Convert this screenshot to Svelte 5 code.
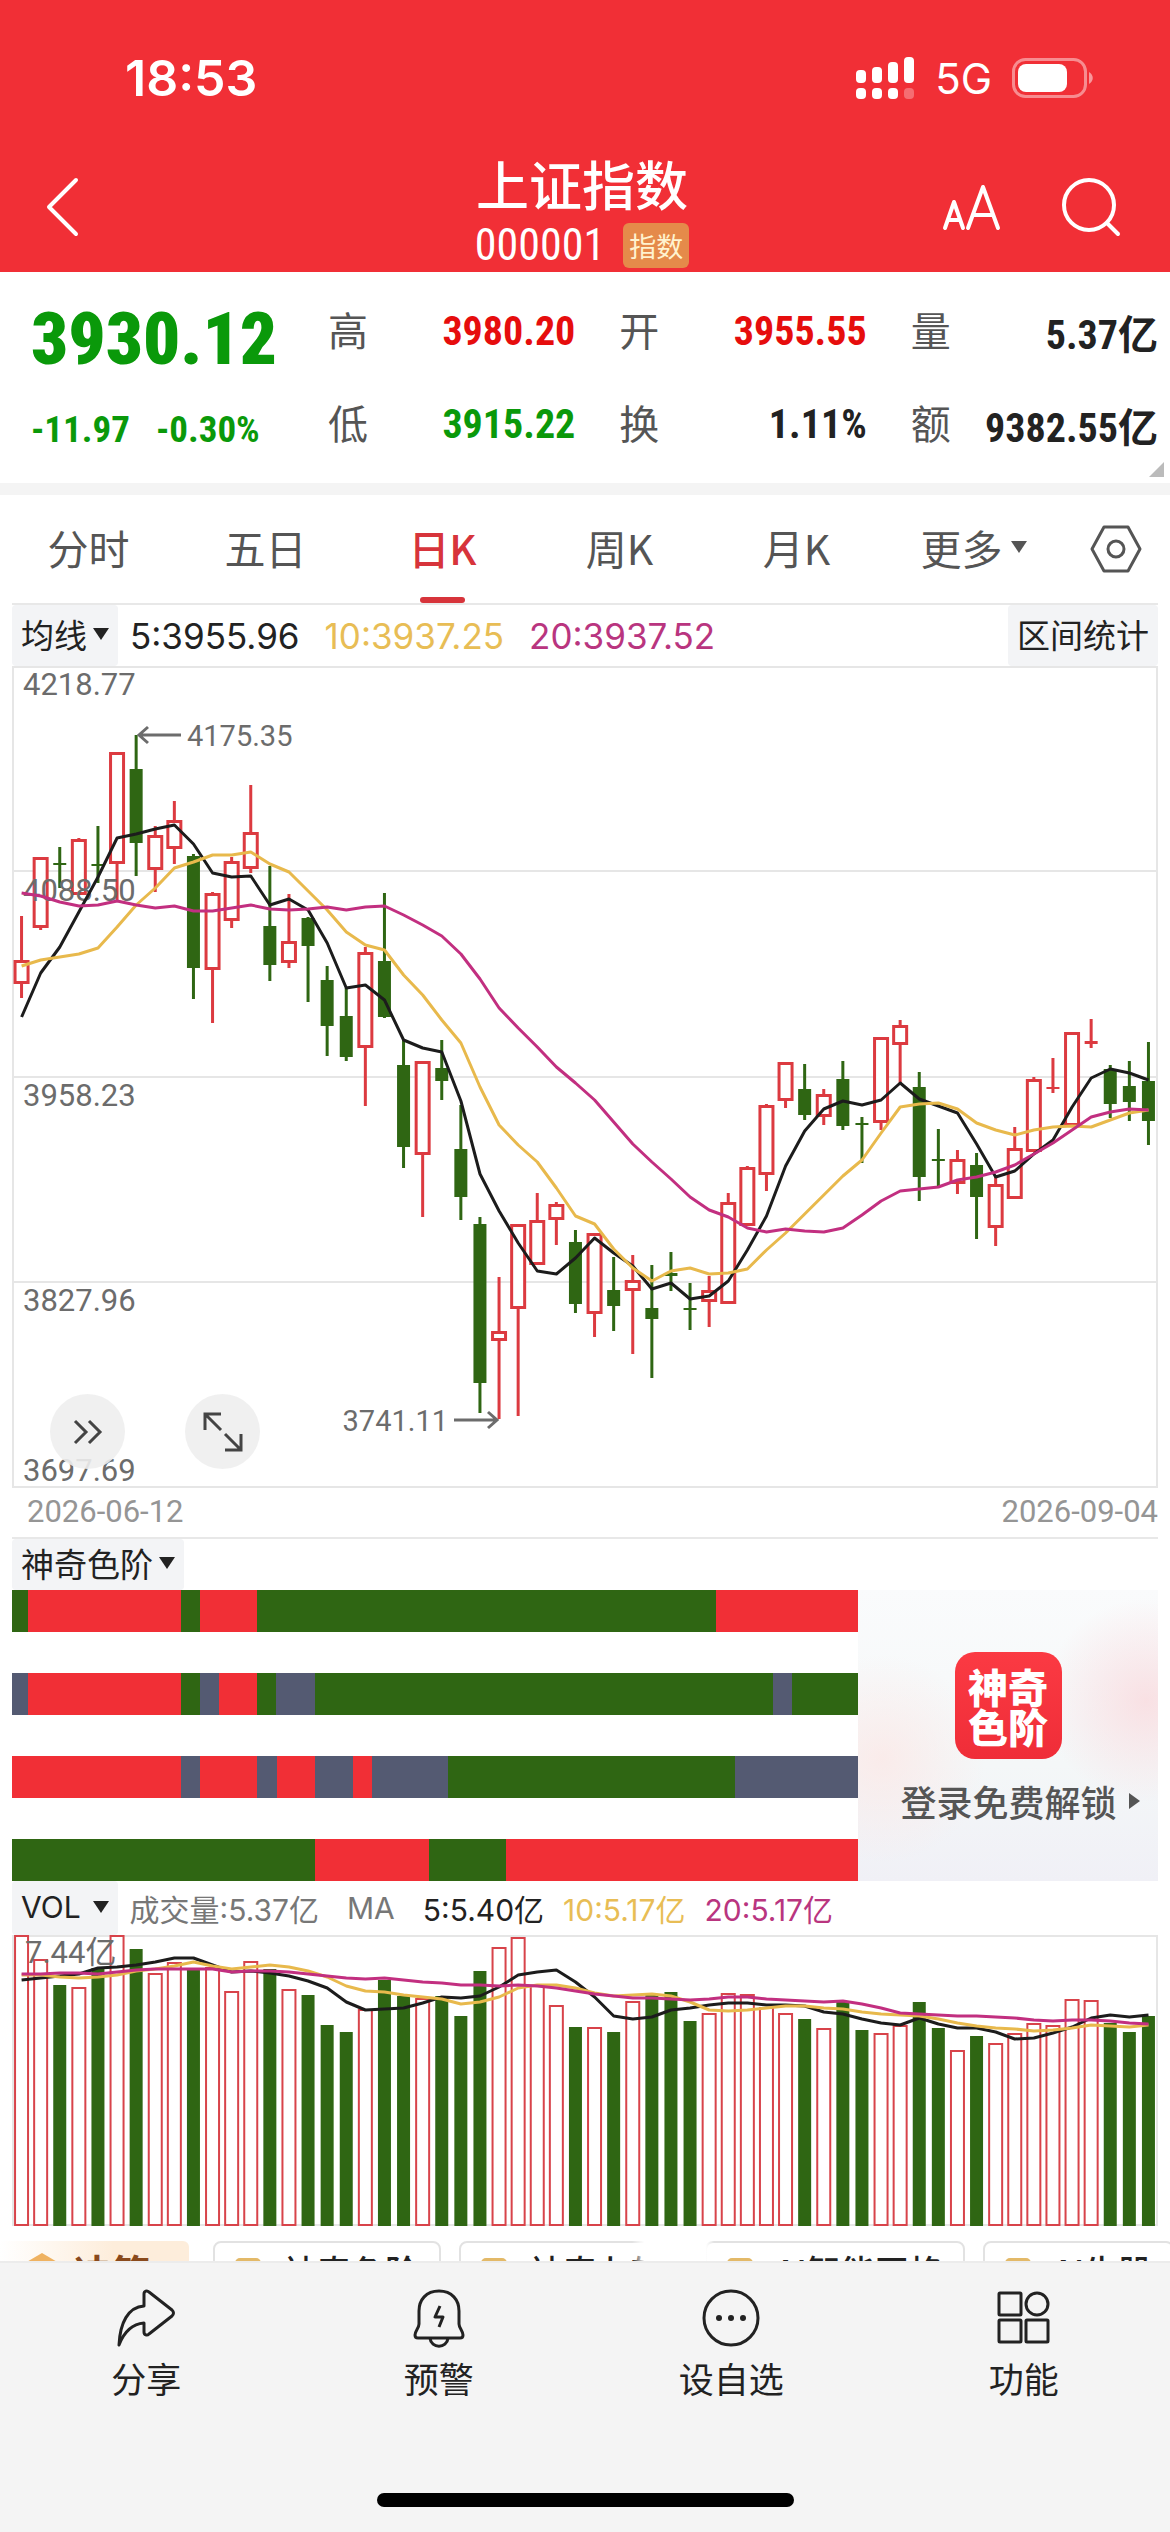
<script lang="ts">
	type Candle = [kind: 'r' | 'g', high: number, top: number, bottom: number, low: number];

	const STEP = 19.1;

	const quotes = [
		{ label: '高', value: '3980.20', tone: 'up' },
		{ label: '开', value: '3955.55', tone: 'up' },
		{ label: '量', value: '5.37亿', tone: '' },
		{ label: '低', value: '3915.22', tone: 'down' },
		{ label: '换', value: '1.11%', tone: '' },
		{ label: '额', value: '9382.55亿', tone: '' }
	];

	const tabs = ['分时', '五日', '日K', '周K', '月K', '更多'];
	let activeTab = $state('日K');

	// y positions inside the 1146 x 822 price chart
	const candles: Candle[] = [
		['r', 250, 294, 318, 332],
		['r', 191, 191, 262, 264],
		['g', 181, 197, 199, 222],
		['r', 172, 173, 229, 229],
		['g', 160, 198, 200, 217],
		['r', 86, 86, 198, 234],
		['g', 69, 103, 177, 210],
		['r', 160, 169, 204, 226],
		['r', 135, 154, 183, 198],
		['g', 188, 190, 302, 333],
		['r', 226, 227, 304, 357],
		['r', 191, 195, 255, 262],
		['r', 119, 166, 203, 207],
		['g', 200, 260, 299, 315],
		['r', 228, 275, 297, 302],
		['g', 251, 252, 280, 336],
		['g', 300, 314, 360, 390],
		['g', 322, 350, 391, 395],
		['r', 281, 286, 382, 440],
		['g', 227, 295, 351, 352],
		['g', 374, 399, 481, 502],
		['r', 395, 395, 489, 551],
		['g', 374, 402, 415, 434],
		['g', 439, 483, 531, 554],
		['g', 551, 558, 717, 747],
		['r', 611, 665, 675, 753],
		['r', 558, 558, 643, 750],
		['r', 527, 554, 599, 599],
		['r', 536, 538, 554, 579],
		['g', 564, 576, 638, 647],
		['r', 567, 567, 648, 671],
		['g', 591, 624, 640, 665],
		['r', 589, 614, 625, 688],
		['g', 599, 642, 653, 712],
		['g', 586, 607, 610, 625],
		['g', 617, 642, 644, 664],
		['r', 610, 624, 636, 661],
		['r', 527, 536, 638, 638],
		['r', 500, 501, 560, 560],
		['r', 438, 439, 509, 525],
		['r', 396, 396, 435, 442],
		['g', 398, 423, 449, 454],
		['r', 423, 428, 451, 459],
		['g', 395, 413, 460, 464],
		['g', 451, 457, 459, 497],
		['r', 371, 371, 457, 464],
		['r', 354, 359, 379, 417],
		['g', 406, 421, 511, 535],
		['g', 463, 493, 495, 520],
		['r', 484, 493, 518, 528],
		['g', 487, 499, 531, 573],
		['r', 511, 518, 562, 580],
		['r', 461, 482, 533, 533],
		['r', 411, 413, 486, 486],
		['r', 392, 421, 423, 427],
		['r', 366, 366, 460, 460],
		['r', 353, 375, 378, 382],
		['g', 399, 403, 438, 452],
		['g', 395, 420, 436, 455],
		['g', 376, 415, 455, 479]
	];

	const priceLines = {
		ma5: [
			351, 307, 281, 246, 211, 172, 168, 163, 159, 178, 207, 211, 210, 239, 233, 244, 277, 322, 319,
			334, 374, 382, 386, 435, 508, 545, 577, 605, 608, 592, 572, 587, 600, 623, 617, 633, 630, 615,
			584, 550, 500, 465, 443, 435, 439, 434, 417, 433, 440, 447, 478, 511, 505, 488, 474, 441, 412,
			403, 407, 414
		],
		ma10: [
			300, 294, 291, 288, 282, 261, 239, 222, 202, 196, 189, 189, 186, 198, 206, 225, 244, 266, 279,
			284, 309, 329, 354, 377, 421, 459, 479, 496, 522, 550, 558, 583, 602, 615, 605, 602, 608, 607,
			603, 584, 567, 548, 529, 510, 494, 467, 441, 438, 437, 443, 457, 464, 469, 464, 461, 460, 461,
			454, 447, 444
		],
		ma20: [
			227, 230, 236, 240, 239, 235, 239, 242, 240, 245, 245, 242, 239, 243, 244, 243, 241, 244, 241,
			240, 249, 259, 270, 288, 313, 342, 362, 381, 401, 417, 434, 456, 478, 496, 513, 531, 544, 551,
			562, 566, 563, 565, 566, 562, 549, 535, 525, 523, 521, 514, 511, 506, 499, 488, 477, 464, 451,
			446, 443, 444
		]
	};

	// tops of the volume bars, chart height is 291
	const volumes = [
		0, 24, 50, 52, 33, 0, 14, 38, 27, 33, 32, 56, 26, 34, 54, 60, 90, 97, 74, 45, 61, 63, 61, 81, 36,
		12, 2, 50, 70, 92, 92, 97, 66, 60, 57, 86, 78, 58, 59, 72, 78, 84, 93, 67, 95, 98, 90, 67, 93,
		115, 101, 108, 98, 88, 90, 64, 65, 88, 97, 81
	];

	const volumeLines = {
		ma5: [
			45, 43, 41, 39, 33, 32, 30, 27, 23, 23, 30, 37, 36, 38, 41, 46, 53, 67, 75, 74, 73, 68, 62, 63,
			61, 52, 40, 37, 35, 47, 62, 81, 84, 82, 75, 73, 70, 68, 68, 70, 70, 71, 77, 79, 84, 88, 90, 83,
			89, 93, 93, 97, 104, 103, 98, 92, 83, 80, 82, 80
		],
		ma10: [
			40, 40, 42, 43, 42, 40, 36, 34, 31, 27, 31, 34, 32, 30, 32, 36, 42, 51, 56, 57, 60, 62, 64, 69,
			67, 62, 53, 50, 50, 53, 58, 61, 60, 59, 61, 67, 75, 76, 75, 73, 71, 71, 73, 74, 77, 79, 80, 81,
			84, 88, 91, 93, 94, 96, 95, 93, 90, 91, 92, 90
		],
		ma20: [
			39, 39, 38, 38, 39, 37, 35, 34, 34, 34, 34, 37, 36, 36, 37, 39, 41, 43, 44, 43, 45, 47, 48, 50,
			50, 51, 50, 51, 53, 56, 59, 61, 63, 63, 64, 65, 64, 62, 62, 64, 65, 66, 67, 66, 69, 73, 78, 79,
			80, 81, 81, 82, 83, 85, 86, 85, 85, 86, 88, 89
		]
	};

	const axis = [
		{ price: '4218.77', y: 29 },
		{ price: '4088.50', y: 235 },
		{ price: '3958.23', y: 440 },
		{ price: '3827.96', y: 645 },
		{ price: '3697.69', y: 815 }
	];

	// colour ladder: [colour, number of days]
	const ladder: [string, number][][] = [
		[['g', 0.85], ['r', 8], ['g', 1], ['r', 3], ['g', 24], ['r', 7.45]],
		[['n', 0.85], ['r', 8], ['g', 1], ['n', 1], ['r', 2], ['g', 1], ['n', 2], ['g', 24], ['n', 1], ['g', 3.45]],
		[['r', 8.85], ['n', 1], ['r', 3], ['n', 1], ['r', 2], ['n', 2], ['r', 1], ['n', 4], ['g', 15], ['n', 6.45]],
		[['g', 15.85], ['r', 6], ['g', 4], ['r', 18.45]]
	];

	const chips = ['神奇色阶', '神奇九转', 'AI智能网格', 'AI牛股'];

	const cx = (i: number) => STEP * (i + 0.5);
	const points = (ys: number[]) => ys.map((y, i) => `${cx(i).toFixed(1)},${y}`).join(' ');
</script>

<div class="page">
	<header>
		<div class="status">
			<span class="time">18:53</span>
			<div class="status-right">
				<svg width="60" height="44" viewBox="0 0 60 44" fill="#fff">
					<rect x="1" y="14" width="10" height="13" rx="4" />
					<rect x="17" y="11" width="10" height="16" rx="4" />
					<rect x="33" y="6" width="10" height="21" rx="4" />
					<rect x="49" y="1" width="10" height="26" rx="4" />
					<rect x="1" y="32" width="10" height="11" rx="4" />
					<rect x="17" y="32" width="10" height="11" rx="4" />
					<rect x="33" y="32" width="10" height="11" rx="4" />
					<rect x="49" y="32" width="10" height="11" rx="4" opacity="0.3" />
				</svg>
				<span class="network">5G</span>
				<svg width="82" height="40" viewBox="0 0 82 40">
					<rect x="1.5" y="1.5" width="72" height="37" rx="12" fill="none" stroke="#fff" stroke-width="3" opacity="0.45" />
					<rect x="6" y="6" width="49" height="28" rx="8" fill="#fff" />
					<path d="M77 14c5 3 5 9 0 12z" fill="#fff" opacity="0.5" />
				</svg>
			</div>
		</div>
		<div class="titlebar">
			<button class="back" aria-label="返回">
				<svg width="40" height="62" viewBox="0 0 40 62" fill="none" stroke="#fff" stroke-width="4" stroke-linecap="round" stroke-linejoin="round">
					<path d="M34 4L7 31l27 27" />
				</svg>
			</button>
			<div class="title">
				<h1>上证指数</h1>
				<div class="code"><span>000001</span><span class="badge">指数</span></div>
			</div>
			<div class="actions">
				<button aria-label="字体大小">
					<svg width="60" height="48" viewBox="0 0 60 48" fill="none" stroke="#fff" stroke-width="4" stroke-linecap="round" stroke-linejoin="round">
						<path d="M3 45L12 19l9 26M6 37h12M26 45L41 4l15 41M31 32h20" />
					</svg>
				</button>
				<button aria-label="搜索">
					<svg width="62" height="62" viewBox="0 0 62 62" fill="none" stroke="#fff" stroke-width="4" stroke-linecap="round">
						<circle cx="29" cy="29" r="25" />
						<path d="M47 47l11 11" />
					</svg>
				</button>
			</div>
		</div>
	</header>

	<section class="quote">
		<div class="last">
			<strong>3930.12</strong>
			<div class="change"><span>-11.97</span><span>-0.30%</span></div>
		</div>
		<dl>
			{#each quotes as quote (quote.label)}
				<div>
					<dt>{quote.label}</dt>
					<dd class={quote.tone}>{quote.value}</dd>
				</div>
			{/each}
		</dl>
		<i class="corner"></i>
	</section>

	<nav class="tabs">
		{#each tabs as tab (tab)}
			<button class:active={tab === activeTab} onclick={() => (activeTab = tab)}>
				{tab}{#if tab === '更多'}<i class="caret"></i>{/if}
			</button>
		{/each}
		<button class="setting" aria-label="设置">
			<svg width="54" height="50" viewBox="0 0 54 50" fill="none" stroke="#555" stroke-width="3" stroke-linejoin="round">
				<path d="M15 3h24l12 22-12 22H15L3 25z" />
				<circle cx="27" cy="25" r="8" />
			</svg>
		</button>
	</nav>

	<main>
		<div class="toolbar">
			<button class="picker">均线<i class="caret"></i></button>
			<span class="c5">5:3955.96</span>
			<span class="c10">10:3937.25</span>
			<span class="c20">20:3937.52</span>
			<button class="picker range">区间统计</button>
		</div>

		<div class="price">
			<svg viewBox="0 0 1146 822">
				<path class="frame" d="M1 1H1145V821H1z" />
				{#each [205, 411, 616] as y (y)}
					<path class="grid" d="M0 {y}H1146" />
				{/each}
				{#each candles as [kind, high, top, bottom, low], i (i)}
					{#if kind === 'g'}
						<path class="wick-g" d="M{cx(i)} {high}V{low}" />
						<rect class="fill-g" x={cx(i) - 6.5} y={top} width="13" height={bottom - top} />
					{:else}
						<path class="wick-r" d="M{cx(i)} {high}V{top}M{cx(i)} {bottom}V{low}" />
						{#if bottom - top < 5}
							<rect class="fill-r" x={cx(i) - 6.5} y={top} width="13" height={bottom - top} />
							<path class="wick-r" d="M{cx(i)} {top}V{bottom}" />
						{:else}
							<rect class="line-r" x={cx(i) - 6.5} y={top + 1.5} width="13" height={bottom - top - 3} />
						{/if}
					{/if}
				{/each}
				{#each axis as { price, y } (price)}
					<text class="axis" x="11" {y}>{price}</text>
				{/each}
				<polyline class="s5" points={points(priceLines.ma5)} />
				<polyline class="s10" points={points(priceLines.ma10)} />
				<polyline class="s20" points={points(priceLines.ma20)} />
				<path class="arrow" d="M169 69H127M136 61l-9 8 9 8" />
				<text class="mark" x="175" y="80">4175.35</text>
				<path class="arrow" d="M442 754H485M476 746l9 8-9 8" />
				<text class="mark" x="436" y="765" text-anchor="end">3741.11</text>
			</svg>
			<div class="float">
				<button aria-label="展开">
					<svg width="32" height="28" viewBox="0 0 32 28" fill="none" stroke="#444" stroke-width="3">
						<path d="M3 3l11 11L3 25M17 3l11 11-11 11" />
					</svg>
				</button>
				<button aria-label="全屏">
					<svg width="42" height="42" viewBox="0 0 42 42" fill="none" stroke="#444" stroke-width="3">
						<path d="M19 3H3v16M3 3l16 16M23 39h16V23M39 39L23 23" />
					</svg>
				</button>
			</div>
		</div>
		<div class="dates"><span>2026-06-12</span><span>2026-09-04</span></div>

		<div class="ladder-head">
			<button class="picker">神奇色阶<i class="caret"></i></button>
		</div>
		<div class="ladder">
			<div class="strips">
				{#each ladder as strip, i (i)}
					<div class="strip">
						{#each strip as [color, days], j (j)}
							<i class="cell-{color}" style="flex-grow: {days}"></i>
						{/each}
					</div>
				{/each}
			</div>
			<a class="unlock" href="#login">
				<span class="logo">神奇<br />色阶</span>
				<span class="unlock-text">登录免费解锁<i></i></span>
			</a>
		</div>

		<div class="volume-head">
			<button class="picker">VOL<i class="caret"></i></button>
			<span class="total">成交量:5.37亿</span>
			<span class="ma">MA</span>
			<span class="c5">5:5.40亿</span>
			<span class="c10">10:5.17亿</span>
			<span class="c20">20:5.17亿</span>
		</div>
		<svg class="volume" viewBox="0 0 1146 291">
			<path class="frame" d="M1 1H1145V290H1z" />
			{#each volumes as top, i (i)}
				{#if candles[i][0] === 'g'}
					<rect class="fill-g" x={cx(i) - 6.5} y={top} width="13" height={291 - top} />
				{:else}
					<rect class="bar-r" x={cx(i) - 6.5} y={top + 1} width="13" height={289 - top} />
				{/if}
			{/each}
			<text class="axis" x="13" y="28">7.44亿</text>
			<polyline class="s5" points={points(volumeLines.ma5)} />
			<polyline class="s10" points={points(volumeLines.ma10)} />
			<polyline class="s20" points={points(volumeLines.ma20)} />
		</svg>
	</main>

	<div class="chips">
		<button class="decision">
			<svg width="36" height="36" viewBox="0 0 36 36" fill="#efb261"><path d="M18 0l17 10v16L18 36 1 26V10z" /></svg>
			决策
		</button>
		{#each chips as chip (chip)}
			<button class="chip"><i></i>{chip}</button>
		{/each}
	</div>

	<footer>
		<div class="menu">
			<button>
				<svg width="60" height="60" viewBox="0 0 60 60">
					<path d="M3 57C4 35 12 19 28 18V6c0-3 3-4 5-2l23 18q3 3 0 6L33 46c-2 2-5 1-5-2V35C16 36 8 44 3 57z" />
				</svg>
				分享
			</button>
			<button>
				<svg width="60" height="60" viewBox="0 0 60 60">
					<path d="M30 3C17 3 10 12 10 23v13c0 4-4 7-4 11 0 2 1 3 3 3h42c2 0 3-1 3-3 0-4-4-7-4-11V23C50 12 43 3 30 3z" />
					<path d="M21 50c1 11 17 11 18 0" />
					<path d="M31 18l-5 11h8l-4 10" />
				</svg>
				预警
			</button>
			<button>
				<svg width="60" height="60" viewBox="0 0 60 60">
					<circle cx="30" cy="30" r="27" />
					<g class="dots">
						<circle cx="18" cy="30" r="3" />
						<circle cx="30" cy="30" r="3" />
						<circle cx="42" cy="30" r="3" />
					</g>
				</svg>
				设自选
			</button>
			<button>
				<svg width="60" height="60" viewBox="0 0 60 60">
					<rect x="5" y="5" width="22" height="22" rx="1" />
					<circle cx="43" cy="16" r="11" />
					<rect x="5" y="32" width="22" height="22" rx="1" />
					<rect x="32" y="32" width="22" height="22" rx="1" />
				</svg>
				功能
			</button>
		</div>
		<div class="home"></div>
	</footer>
</div>

<style>
	:global(body) {
		margin: 0;
		background: #f4f4f4;
	}

	.page {
		--red: #f12f36;
		--green: #2f6613;
		--sans: Inter, 'Noto Sans CJK SC', sans-serif;
		--din: 'Liberation Sans Narrow', 'Roboto Condensed', 'Noto Sans CJK SC', sans-serif;
		font-family: 'Noto Sans CJK SC', sans-serif;
		background: #fff;
		color: #222;
	}

	button {
		border: 0;
		padding: 0;
		background: none;
		font: inherit;
		color: inherit;
	}

	svg {
		display: block;
	}

	header {
		background: var(--red);
		color: #fff;
		padding-bottom: 4px;
	}

	.status {
		display: flex;
		justify-content: space-between;
		align-items: center;
		height: 156px;
		padding: 0 76px 0 125px;
		font-family: var(--sans);
	}

	.time {
		font-size: 50px;
		font-weight: 600;
	}

	.status-right {
		display: flex;
		align-items: center;
		gap: 20px;
	}

	.network {
		font-size: 42px;
	}

	.titlebar {
		display: grid;
		grid-template-columns: 1fr auto 1fr;
		align-items: center;
		height: 112px;
		padding: 0 48px 0 42px;
	}

	.back {
		justify-self: start;
		padding-bottom: 14px;
	}

	.title {
		display: grid;
		gap: 8px;
		text-align: center;
	}

	h1 {
		margin: 0;
		font-size: 53px;
		line-height: 54px;
		font-weight: 500;
	}

	.code {
		display: flex;
		align-items: center;
		justify-content: center;
		gap: 18px;
		font-family: var(--din);
		font-size: 44px;
		line-height: 54px;
	}

	.badge {
		padding: 0 6px;
		border-radius: 6px;
		background: #e58a4a;
		color: #fff3cf;
		font-family: 'Noto Sans CJK SC', sans-serif;
		font-size: 27px;
		line-height: 45px;
	}

	.actions {
		display: flex;
		align-items: center;
		justify-content: flex-end;
		gap: 58px;
		padding-bottom: 14px;
	}

	.quote {
		position: relative;
		display: flex;
		padding: 12px 12px 12px 31px;
		height: 187px;
		border-bottom: 12px solid #f4f4f4;
	}

	.last {
		width: 297px;
		color: #0a990a;
		font-family: var(--din);
		font-weight: bold;
	}

	.last strong {
		display: block;
		font-size: 73px;
		line-height: 110px;
	}

	.change {
		display: flex;
		gap: 26px;
		font-size: 37px;
		line-height: 72px;
	}

	dl {
		flex: 1;
		display: grid;
		grid-template-columns: repeat(3, 1fr);
		grid-auto-rows: 93px;
		column-gap: 44px;
		margin: 0;
	}

	dl div {
		display: flex;
		align-items: center;
		justify-content: space-between;
	}

	dt {
		padding-bottom: 3px;
		font-size: 40px;
		color: #555;
	}

	dd {
		margin: 0;
		padding-top: 2px;
		font-family: var(--din);
		font-size: 40px;
		font-weight: bold;
		white-space: nowrap;
	}

	.up {
		color: #e60d0d;
	}

	.down {
		color: #0a990a;
	}

	.corner {
		position: absolute;
		right: 6px;
		bottom: 6px;
		border-left: 15px solid transparent;
		border-bottom: 15px solid #bbb;
	}

	.tabs {
		display: grid;
		grid-template-columns: repeat(6, 177fr) 108fr;
		height: 108px;
	}

	.tabs button {
		position: relative;
		display: flex;
		align-items: center;
		justify-content: center;
		padding-bottom: 4px;
		font-size: 41px;
		color: #555;
	}

	.tabs .setting {
		padding-bottom: 0;
	}

	.tabs .active {
		color: #d7343b;
		font-weight: 500;
	}

	.tabs .active::after {
		content: '';
		position: absolute;
		bottom: 0;
		width: 45px;
		height: 6px;
		border-radius: 3px;
		background: #d7343b;
	}

	.caret {
		border: 8px solid transparent;
		border-top: 12px solid currentColor;
		border-bottom: 0;
		margin-left: 8px;
	}

	main {
		padding: 0 12px;
	}

	.toolbar {
		display: flex;
		align-items: center;
		gap: 25px;
		height: 61px;
		border-top: 2px solid #e8e8e8;
		font-family: var(--sans);
		font-size: 35px;
	}

	.toolbar .picker + span {
		margin-left: -13px;
	}

	.picker {
		display: flex;
		align-items: center;
		align-self: stretch;
		padding: 0 9px 3px;
		border-radius: 4px;
		background: #f3f4f6;
		font-family: 'Noto Sans CJK SC', sans-serif;
		font-size: 33px;
	}

	.picker .caret {
		margin-left: 6px;
	}

	.range {
		margin-left: auto;
	}

	.c5 {
		color: #222;
	}

	.c10 {
		color: #e8bd55;
	}

	.c20 {
		color: #b9357f;
	}

	.price {
		position: relative;
	}

	.frame,
	.grid {
		fill: none;
		stroke: #e6e6e6;
		stroke-width: 2;
	}

	.wick-g {
		stroke: var(--green);
		stroke-width: 3;
	}

	.wick-r {
		stroke: #dc3a40;
		stroke-width: 3;
	}

	.fill-g {
		fill: var(--green);
	}

	.fill-r {
		fill: #dc3a40;
	}

	.line-r {
		fill: #fff;
		stroke: #dc3a40;
		stroke-width: 3;
	}

	.bar-r {
		fill: #fff;
		stroke: #d8434a;
		stroke-width: 2;
	}

	polyline {
		fill: none;
		stroke-width: 3;
		stroke-linejoin: round;
	}

	.s5 {
		stroke: #1c1c1c;
	}

	.s10 {
		stroke: #e8b94c;
	}

	.s20 {
		stroke: #c22f80;
	}

	.axis,
	.mark {
		fill: #6c6c6c;
		font-family: Roboto, 'Noto Sans CJK SC', sans-serif;
		font-size: 31px;
	}

	.mark {
		font-size: 29px;
	}

	.arrow {
		fill: none;
		stroke: #6c6c6c;
		stroke-width: 3;
	}

	.float {
		position: absolute;
		left: 38px;
		bottom: 19px;
		display: flex;
		gap: 60px;
	}

	.float button {
		display: grid;
		place-items: center;
		width: 75px;
		height: 75px;
		border-radius: 50%;
		background: rgba(238, 238, 238, 0.9);
	}

	.dates {
		display: flex;
		justify-content: space-between;
		padding-left: 15px;
		height: 49px;
		font-family: Roboto, sans-serif;
		font-size: 31px;
		line-height: 48px;
		color: #959595;
	}

	.ladder-head {
		display: flex;
		height: 51px;
		border-top: 2px solid #e8e8e8;
	}

	.ladder {
		display: flex;
	}

	.strips {
		flex: 846;
		display: flex;
		flex-direction: column;
		gap: 41px;
	}

	.strip {
		display: flex;
		height: 42px;
	}

	.strip i {
		flex-basis: 0;
	}

	.cell-r {
		background: var(--red);
	}

	.cell-g {
		background: var(--green);
	}

	.cell-n {
		background: #545a72;
	}

	.unlock {
		flex: 300;
		box-sizing: border-box;
		display: flex;
		flex-direction: column;
		align-items: center;
		justify-content: center;
		gap: 16px;
		padding-top: 8px;
		background:
			radial-gradient(circle at 96% 38%, rgba(250, 214, 218, 0.7), transparent 30%),
			radial-gradient(circle at 8% 58%, rgba(252, 230, 228, 0.7), transparent 32%),
			linear-gradient(#fafbfc, #f4f7f8 60%, #f0f0f6);
		color: #555;
		text-decoration: none;
	}

	.logo {
		display: grid;
		place-content: center;
		width: 107px;
		height: 107px;
		border-radius: 20px;
		background: linear-gradient(#fb3a43, #ef2d38);
		color: #fff;
		font-size: 40px;
		line-height: 40px;
		font-weight: 900;
	}

	.unlock-text {
		display: flex;
		align-items: center;
		padding-left: 24px;
		font-size: 36px;
		font-weight: 500;
		white-space: nowrap;
	}

	.unlock-text i {
		margin-left: 12px;
		border: 8px solid transparent;
		border-left: 11px solid #555;
		border-right: 0;
	}

	.volume-head {
		display: flex;
		align-items: center;
		height: 54px;
		gap: 19px;
		font-family: var(--sans);
		font-size: 30px;
	}

	.volume-head .picker {
		font-family: var(--sans);
		font-size: 30px;
	}

	.volume-head .caret {
		margin-left: 12px;
	}

	.total,
	.ma {
		color: #777;
	}

	.total {
		margin-left: -7px;
	}

	.ma {
		margin: 0 9px;
	}

	.chips {
		position: relative;
		display: flex;
		align-items: flex-start;
		gap: 18px;
		height: 20px;
		margin-top: 15px;
		overflow: hidden;
	}

	.chips::after {
		content: '';
		position: absolute;
		left: 54%;
		width: 7%;
		height: 100%;
		background: linear-gradient(90deg, transparent, #fff 15%, #fff 90%, transparent);
	}

	.chips button {
		flex-shrink: 0;
		display: flex;
		align-items: center;
		box-sizing: border-box;
		height: 60px;
		white-space: nowrap;
	}

	.chips .decision {
		width: 189px;
		margin-right: 6px;
		padding-left: 24px;
		gap: 14px;
		border-radius: 0 6px 0 0;
		background: linear-gradient(90deg, #fff, #fdeddb 60%);
		color: #8a4a1c;
		font-size: 38px;
		line-height: 56px;
		font-weight: bold;
	}

	.chips .chip {
		padding: 0 20px;
		gap: 22px;
		border: 2px solid #e2e2e2;
		border-radius: 8px;
		font-size: 34px;
		line-height: 56px;
		font-weight: 500;
	}

	.chip i {
		width: 26px;
		height: 26px;
		border-radius: 5px;
		background: #e3b968;
	}

	footer {
		border-top: 2px solid #ececec;
		background: #f4f4f4;
		padding-bottom: 25px;
	}

	.menu {
		display: grid;
		grid-template-columns: repeat(4, 1fr);
		padding-top: 25px;
	}

	.menu button {
		display: flex;
		flex-direction: column;
		align-items: center;
		gap: 5px;
		font-size: 35px;
		line-height: 50px;
	}

	.menu svg {
		fill: none;
		stroke: #222;
		stroke-width: 3;
		stroke-linejoin: round;
	}

	.menu .dots {
		fill: #222;
		stroke: none;
	}

	.home {
		width: 417px;
		height: 14px;
		margin: 90px auto 0;
		border-radius: 7px;
		background: #000;
	}
</style>
